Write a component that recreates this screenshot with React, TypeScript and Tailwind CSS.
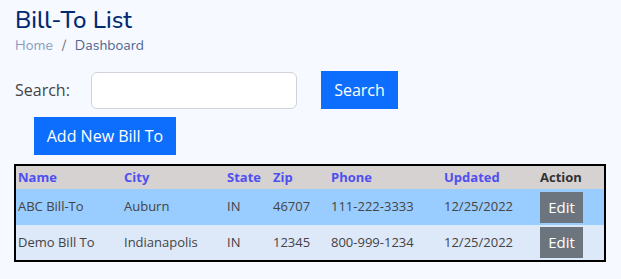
const ROWS = [
  { name: 'ABC Bill-To', city: 'Auburn', state: 'IN', zip: '46707', phone: '111-222-3333', updated: '12/25/2022', bg: 'bg-[#99ccff]' },
  { name: 'Demo Bill To', city: 'Indianapolis', state: 'IN', zip: '12345', phone: '800-999-1234', updated: '12/25/2022', bg: 'bg-[#dde8f8]' },
];

export default function App() {
  return (
    <div className="min-h-[279px] w-[621px] bg-[#f6f9ff] px-[15px] pt-[4px] font-['Open_Sans',sans-serif] text-[#444444]">
      <h1 className="font-['Nunito','Lato',sans-serif] text-[24px] font-medium leading-[32px] text-[#012970]">Bill-To List</h1>
      <div className="mt-[1px] flex items-center gap-[9px] font-['Nunito','Lato',sans-serif] text-[14px] leading-[18px]">
        <span className="text-[#899bbd]">Home</span>
        <span className="text-[#6c757d]">/</span>
        <span className="text-[#51678f]">Dashboard</span>
      </div>

      <div className="mt-[16px] flex items-center">
        <label className="w-[76px] text-[16px] text-[#444444]">Search:</label>
        <input className="h-[37px] w-[206px] rounded-[6px] border border-[#ced4da] bg-white" />
        <button className="ml-[24px] h-[38px] w-[77px] bg-[#0d6efd] text-[16px] text-white">Search</button>
      </div>

      <button className="ml-[19px] mt-[8px] h-[38px] w-[142px] bg-[#0d6efd] text-[16px] text-white">Add New Bill To</button>

      <table className="-ml-[1px] mt-[9px] w-[592px] table-fixed border-collapse border-[2px] border-black text-[13px]">
        <colgroup>
          <col className="w-[107px]" />
          <col className="w-[103px]" />
          <col className="w-[46px]" />
          <col className="w-[58px]" />
          <col className="w-[113px]" />
          <col className="w-[96px]" />
          <col />
        </colgroup>
        <thead>
          <tr className="h-[24px] bg-[#d6d2d2] text-left font-bold">
            <th className="pl-[2px] text-[#4f4ff0]">Name</th>
            <th className="pl-[2px] text-[#4f4ff0]">City</th>
            <th className="pl-[2px] text-[#4f4ff0]">State</th>
            <th className="pl-[2px] text-[#4f4ff0]">Zip</th>
            <th className="pl-[2px] text-[#4f4ff0]">Phone</th>
            <th className="pl-[2px] text-[#4f4ff0]">Updated</th>
            <th className="pl-[2px] text-[#333333]">Action</th>
          </tr>
        </thead>
        <tbody>
          {ROWS.map((r) => (
            <tr key={r.name} className={`h-[36px] ${r.bg} text-[#444444]`}>
              <td className="pl-[2px]">{r.name}</td>
              <td className="pl-[2px]">{r.city}</td>
              <td className="pl-[2px]">{r.state}</td>
              <td className="pl-[2px]">{r.zip}</td>
              <td className="pl-[2px]">{r.phone}</td>
              <td className="pl-[2px]">{r.updated}</td>
              <td className="py-[2px] pl-[2px]">
                <button className="h-[31px] w-[43px] bg-[#6c757d] text-[15px] text-white">Edit</button>
              </td>
            </tr>
          ))}
        </tbody>
      </table>
    </div>
  );
}
